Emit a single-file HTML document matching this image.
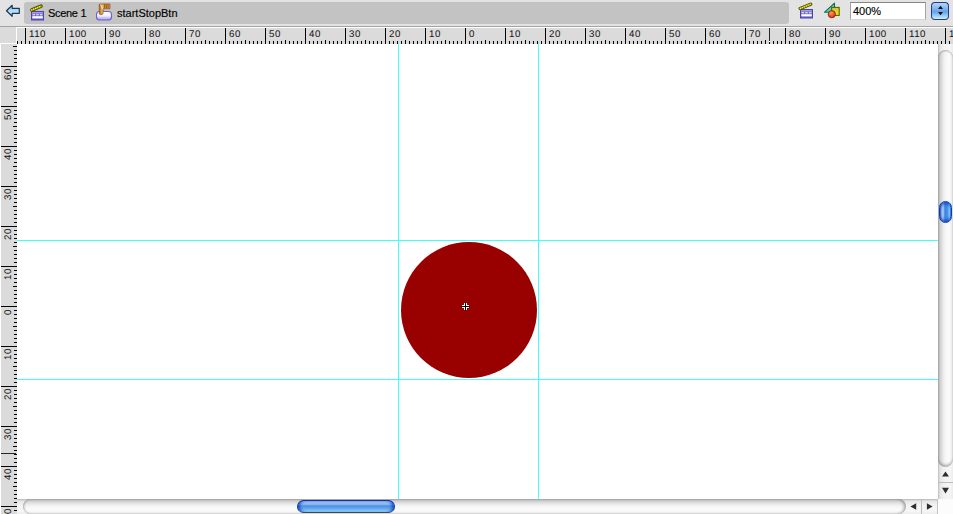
<!DOCTYPE html>
<html><head><meta charset="utf-8">
<style>
html,body{margin:0;padding:0;}
body{width:953px;height:514px;position:relative;overflow:hidden;background:#e3e3e3;font-family:"Liberation Sans",sans-serif;}
.abs{position:absolute;}
.hl{position:absolute;top:29px;font-size:9.7px;line-height:11px;color:#111;letter-spacing:0.5px;text-rendering:geometricPrecision;white-space:nowrap;}
.vl{position:absolute;left:3px;width:11px;text-align:right;font-size:9.7px;line-height:11px;color:#111;letter-spacing:0.5px;text-rendering:geometricPrecision;white-space:nowrap;transform-origin:0 0;}
</style></head><body>
<!-- toolbar -->
<div class="abs" style="left:0;top:26px;width:953px;height:1px;background:#a3a3a3"></div>
<div class="abs" style="left:0;top:27px;width:16px;height:16px;background:#dbdbdb"></div>
<div class="abs" style="left:24px;top:2px;width:765px;height:22px;background:#c3c3c3;border-radius:3px"></div>
<div class="abs" style="left:48px;top:7px;letter-spacing:-0.3px;font-size:11px;line-height:13px;color:#000;-webkit-text-stroke:0.15px #000">Scene 1</div>
<div class="abs" style="left:117px;top:7px;font-size:11px;line-height:13px;color:#000;-webkit-text-stroke:0.15px #000">startStopBtn</div>
<div class="abs" style="left:850px;top:2px;width:74px;height:16px;background:#fff;border:1px solid #a4a4a4;border-top-color:#858585;border-bottom-color:#d4d4d4"></div>
<div class="abs" style="left:853px;top:5px;font-size:11px;line-height:13px;color:#000;-webkit-text-stroke:0.15px #000">400%</div>
<div class="abs" style="left:931px;top:2px;width:18px;height:18px;box-sizing:border-box;border:1px solid #1e3c90;border-bottom-color:#3a3a48;background:linear-gradient(#b4d6f8,#74acec 45%,#64a2ea 55%,#c4f2ff);border-radius:4px"></div>

<!-- back arrow -->
<svg class="abs" style="left:0;top:0" width="24" height="26">
<defs><linearGradient id="ga" x1="0" y1="0" x2="0" y2="1"><stop offset="0" stop-color="#8cc4f4"/><stop offset="1" stop-color="#d8f4ff"/></linearGradient></defs>
<path d="M6.5,10.8 L12.2,5.3 L12.2,8.3 L19.3,8.3 L19.3,13.3 L12.2,13.3 L12.2,16.3 Z" fill="url(#ga)" stroke="#1c3458" stroke-width="1.2" stroke-linejoin="round"/>
</svg>
<!-- clapper 1 -->
<svg class="abs" style="left:29px;top:3px" width="17" height="19">
<rect x="2.5" y="8.5" width="12" height="8.5" fill="#6a62d0" stroke="#4c44a8" stroke-width="1"/>
<rect x="3" y="9.4" width="11" height="0.9" fill="#c8c4f4"/>
<rect x="3.5" y="11.2" width="2.6" height="1.1" fill="#f0f0ff"/><rect x="7.2" y="11.2" width="2.6" height="1.1" fill="#f0f0ff"/><rect x="10.9" y="11.2" width="2.6" height="1.1" fill="#f0f0ff"/>
<rect x="3.3" y="13.2" width="10.5" height="2.2" fill="#ffffff"/>
<path d="M2.9,7.0 L12,3.2" stroke="#484800" stroke-width="3.6" stroke-linecap="round"/>
<path d="M2.9,7.0 L12,3.2" stroke="#8c8c00" stroke-width="2.3" stroke-linecap="round"/>
<path d="M2.6,7.1 L12.2,3.1" stroke="#ffff30" stroke-width="1.4" stroke-linecap="round" stroke-dasharray="0.1,2.1"/>
</svg>
<!-- button icon -->
<svg class="abs" style="left:94px;top:2px" width="20" height="20">
<defs><linearGradient id="gb" x1="0" y1="0" x2="0" y2="1"><stop offset="0" stop-color="#ffffff"/><stop offset="0.5" stop-color="#f2f0ff"/><stop offset="1" stop-color="#a098e4"/></linearGradient>
<linearGradient id="gh" x1="0" y1="0" x2="1" y2="0"><stop offset="0" stop-color="#a86010"/><stop offset="0.3" stop-color="#f4c070"/><stop offset="0.5" stop-color="#c88838"/><stop offset="1" stop-color="#d8a050"/></linearGradient></defs>
<rect x="2.5" y="9.5" width="15" height="8.5" rx="3" fill="url(#gb)" stroke="#6a62d0" stroke-width="1.1"/>
<path d="M5.2,2.3 L8,2 L16,2 L16,6.8 L9.2,6.8 L8.9,12 Q7.1,13.4 5.3,12 Z" fill="url(#gh)" stroke="#8a5418" stroke-width="0.7"/>
<path d="M6.6,2.4 L8.6,7.2" stroke="#fff0b0" stroke-width="0.8"/>
<path d="M10.6,2.3 V6.2 M12.4,2.3 V6.2 M14.2,2.3 V6.2" stroke="#8a5418" stroke-width="0.8"/>
</svg>
<!-- clapper 2 -->
<svg class="abs" style="left:798px;top:2px" width="17" height="19">
<rect x="2.5" y="7.5" width="12" height="8.5" fill="#6a62d0" stroke="#4c44a8" stroke-width="1"/>
<rect x="3" y="8.4" width="11" height="0.9" fill="#c8c4f4"/>
<rect x="3.5" y="10.2" width="2.6" height="1.1" fill="#f0f0ff"/><rect x="7.2" y="10.2" width="2.6" height="1.1" fill="#f0f0ff"/><rect x="10.9" y="10.2" width="2.6" height="1.1" fill="#f0f0ff"/>
<rect x="3.3" y="12.2" width="10.5" height="2.2" fill="#ffffff"/>
<path d="M2.2,6.5 L12.6,2.2" stroke="#484800" stroke-width="3.4" stroke-linecap="round"/>
<path d="M2.2,6.5 L12.6,2.2" stroke="#8c8c00" stroke-width="2.2" stroke-linecap="round"/>
<path d="M2.4,6.4 L12.4,2.3" stroke="#ffff30" stroke-width="1.3" stroke-linecap="round" stroke-dasharray="0.1,2.0"/>
</svg>
<!-- shapes icon -->
<svg class="abs" style="left:822px;top:1px" width="20" height="19">
<defs><radialGradient id="gc" cx="0.4" cy="0.3" r="0.7"><stop offset="0" stop-color="#ff9a60"/><stop offset="1" stop-color="#e03010"/></radialGradient>
<linearGradient id="gs" x1="0" y1="0" x2="0" y2="1"><stop offset="0" stop-color="#c8c830"/><stop offset="1" stop-color="#e8e820"/></linearGradient></defs>
<path d="M2.6,11.2 L12.5,2.2 L12.5,11.2 Z" fill="#5ad8aa" stroke="#0c6a60" stroke-width="1.1" stroke-linejoin="round"/>
<rect x="9.6" y="6.4" width="7.6" height="8" fill="url(#gs)" stroke="#606000" stroke-width="1.1"/>
<circle cx="9.8" cy="13.2" r="3.6" fill="url(#gc)" stroke="#902000" stroke-width="0.9"/>
</svg>
<!-- stepper arrows -->
<svg class="abs" style="left:931px;top:2px" width="18" height="18">
<path d="M7,6.9 L9.5,3.8 L12,6.9 Z M7,10 L12,10 L9.5,13.2 Z" fill="#0c1020"/>
</svg>
<!-- rulers -->
<svg style="position:absolute;left:16px;top:27px" width="937" height="17" shape-rendering="crispEdges"><rect x="0" y="0" width="937" height="17" fill="#dbdbdb"/><rect x="0" y="0" width="937" height="1" fill="#ffffff"/><rect x="0" y="0" width="1" height="17" fill="#ffffff"/><rect x="1" y="14" width="1" height="3" fill="#000"/><rect x="5" y="14" width="1" height="3" fill="#000"/><rect x="9" y="1" width="1" height="16" fill="#000"/><rect x="13" y="14" width="1" height="3" fill="#000"/><rect x="17" y="14" width="1" height="3" fill="#000"/><rect x="21" y="14" width="1" height="3" fill="#000"/><rect x="25" y="14" width="1" height="3" fill="#000"/><rect x="29" y="13" width="1" height="4" fill="#000"/><rect x="33" y="14" width="1" height="3" fill="#000"/><rect x="37" y="14" width="1" height="3" fill="#000"/><rect x="41" y="14" width="1" height="3" fill="#000"/><rect x="45" y="14" width="1" height="3" fill="#000"/><rect x="49" y="1" width="1" height="16" fill="#000"/><rect x="53" y="14" width="1" height="3" fill="#000"/><rect x="57" y="14" width="1" height="3" fill="#000"/><rect x="61" y="14" width="1" height="3" fill="#000"/><rect x="65" y="14" width="1" height="3" fill="#000"/><rect x="69" y="13" width="1" height="4" fill="#000"/><rect x="73" y="14" width="1" height="3" fill="#000"/><rect x="77" y="14" width="1" height="3" fill="#000"/><rect x="81" y="14" width="1" height="3" fill="#000"/><rect x="85" y="14" width="1" height="3" fill="#000"/><rect x="89" y="1" width="1" height="16" fill="#000"/><rect x="93" y="14" width="1" height="3" fill="#000"/><rect x="97" y="14" width="1" height="3" fill="#000"/><rect x="101" y="14" width="1" height="3" fill="#000"/><rect x="105" y="14" width="1" height="3" fill="#000"/><rect x="109" y="13" width="1" height="4" fill="#000"/><rect x="113" y="14" width="1" height="3" fill="#000"/><rect x="117" y="14" width="1" height="3" fill="#000"/><rect x="121" y="14" width="1" height="3" fill="#000"/><rect x="125" y="14" width="1" height="3" fill="#000"/><rect x="129" y="1" width="1" height="16" fill="#000"/><rect x="133" y="14" width="1" height="3" fill="#000"/><rect x="137" y="14" width="1" height="3" fill="#000"/><rect x="141" y="14" width="1" height="3" fill="#000"/><rect x="145" y="14" width="1" height="3" fill="#000"/><rect x="149" y="13" width="1" height="4" fill="#000"/><rect x="153" y="14" width="1" height="3" fill="#000"/><rect x="157" y="14" width="1" height="3" fill="#000"/><rect x="161" y="14" width="1" height="3" fill="#000"/><rect x="165" y="14" width="1" height="3" fill="#000"/><rect x="169" y="1" width="1" height="16" fill="#000"/><rect x="173" y="14" width="1" height="3" fill="#000"/><rect x="177" y="14" width="1" height="3" fill="#000"/><rect x="181" y="14" width="1" height="3" fill="#000"/><rect x="185" y="14" width="1" height="3" fill="#000"/><rect x="189" y="13" width="1" height="4" fill="#000"/><rect x="193" y="14" width="1" height="3" fill="#000"/><rect x="197" y="14" width="1" height="3" fill="#000"/><rect x="201" y="14" width="1" height="3" fill="#000"/><rect x="205" y="14" width="1" height="3" fill="#000"/><rect x="209" y="1" width="1" height="16" fill="#000"/><rect x="213" y="14" width="1" height="3" fill="#000"/><rect x="217" y="14" width="1" height="3" fill="#000"/><rect x="221" y="14" width="1" height="3" fill="#000"/><rect x="225" y="14" width="1" height="3" fill="#000"/><rect x="229" y="13" width="1" height="4" fill="#000"/><rect x="233" y="14" width="1" height="3" fill="#000"/><rect x="237" y="14" width="1" height="3" fill="#000"/><rect x="241" y="14" width="1" height="3" fill="#000"/><rect x="245" y="14" width="1" height="3" fill="#000"/><rect x="249" y="1" width="1" height="16" fill="#000"/><rect x="253" y="14" width="1" height="3" fill="#000"/><rect x="257" y="14" width="1" height="3" fill="#000"/><rect x="261" y="14" width="1" height="3" fill="#000"/><rect x="265" y="14" width="1" height="3" fill="#000"/><rect x="269" y="13" width="1" height="4" fill="#000"/><rect x="273" y="14" width="1" height="3" fill="#000"/><rect x="277" y="14" width="1" height="3" fill="#000"/><rect x="281" y="14" width="1" height="3" fill="#000"/><rect x="285" y="14" width="1" height="3" fill="#000"/><rect x="289" y="1" width="1" height="16" fill="#000"/><rect x="293" y="14" width="1" height="3" fill="#000"/><rect x="297" y="14" width="1" height="3" fill="#000"/><rect x="301" y="14" width="1" height="3" fill="#000"/><rect x="305" y="14" width="1" height="3" fill="#000"/><rect x="309" y="13" width="1" height="4" fill="#000"/><rect x="313" y="14" width="1" height="3" fill="#000"/><rect x="317" y="14" width="1" height="3" fill="#000"/><rect x="321" y="14" width="1" height="3" fill="#000"/><rect x="325" y="14" width="1" height="3" fill="#000"/><rect x="329" y="1" width="1" height="16" fill="#000"/><rect x="333" y="14" width="1" height="3" fill="#000"/><rect x="337" y="14" width="1" height="3" fill="#000"/><rect x="341" y="14" width="1" height="3" fill="#000"/><rect x="345" y="14" width="1" height="3" fill="#000"/><rect x="349" y="13" width="1" height="4" fill="#000"/><rect x="353" y="14" width="1" height="3" fill="#000"/><rect x="357" y="14" width="1" height="3" fill="#000"/><rect x="361" y="14" width="1" height="3" fill="#000"/><rect x="365" y="14" width="1" height="3" fill="#000"/><rect x="369" y="1" width="1" height="16" fill="#000"/><rect x="373" y="14" width="1" height="3" fill="#000"/><rect x="377" y="14" width="1" height="3" fill="#000"/><rect x="381" y="14" width="1" height="3" fill="#000"/><rect x="385" y="14" width="1" height="3" fill="#000"/><rect x="389" y="13" width="1" height="4" fill="#000"/><rect x="393" y="14" width="1" height="3" fill="#000"/><rect x="397" y="14" width="1" height="3" fill="#000"/><rect x="401" y="14" width="1" height="3" fill="#000"/><rect x="405" y="14" width="1" height="3" fill="#000"/><rect x="409" y="1" width="1" height="16" fill="#000"/><rect x="413" y="14" width="1" height="3" fill="#000"/><rect x="417" y="14" width="1" height="3" fill="#000"/><rect x="421" y="14" width="1" height="3" fill="#000"/><rect x="425" y="14" width="1" height="3" fill="#000"/><rect x="429" y="13" width="1" height="4" fill="#000"/><rect x="433" y="14" width="1" height="3" fill="#000"/><rect x="437" y="14" width="1" height="3" fill="#000"/><rect x="441" y="14" width="1" height="3" fill="#000"/><rect x="445" y="14" width="1" height="3" fill="#000"/><rect x="449" y="1" width="1" height="16" fill="#000"/><rect x="453" y="14" width="1" height="3" fill="#000"/><rect x="457" y="14" width="1" height="3" fill="#000"/><rect x="461" y="14" width="1" height="3" fill="#000"/><rect x="465" y="14" width="1" height="3" fill="#000"/><rect x="469" y="13" width="1" height="4" fill="#000"/><rect x="473" y="14" width="1" height="3" fill="#000"/><rect x="477" y="14" width="1" height="3" fill="#000"/><rect x="481" y="14" width="1" height="3" fill="#000"/><rect x="485" y="14" width="1" height="3" fill="#000"/><rect x="489" y="1" width="1" height="16" fill="#000"/><rect x="493" y="14" width="1" height="3" fill="#000"/><rect x="497" y="14" width="1" height="3" fill="#000"/><rect x="501" y="14" width="1" height="3" fill="#000"/><rect x="505" y="14" width="1" height="3" fill="#000"/><rect x="509" y="13" width="1" height="4" fill="#000"/><rect x="513" y="14" width="1" height="3" fill="#000"/><rect x="517" y="14" width="1" height="3" fill="#000"/><rect x="521" y="14" width="1" height="3" fill="#000"/><rect x="525" y="14" width="1" height="3" fill="#000"/><rect x="529" y="1" width="1" height="16" fill="#000"/><rect x="533" y="14" width="1" height="3" fill="#000"/><rect x="537" y="14" width="1" height="3" fill="#000"/><rect x="541" y="14" width="1" height="3" fill="#000"/><rect x="545" y="14" width="1" height="3" fill="#000"/><rect x="549" y="13" width="1" height="4" fill="#000"/><rect x="553" y="14" width="1" height="3" fill="#000"/><rect x="557" y="14" width="1" height="3" fill="#000"/><rect x="561" y="14" width="1" height="3" fill="#000"/><rect x="565" y="14" width="1" height="3" fill="#000"/><rect x="569" y="1" width="1" height="16" fill="#000"/><rect x="573" y="14" width="1" height="3" fill="#000"/><rect x="577" y="14" width="1" height="3" fill="#000"/><rect x="581" y="14" width="1" height="3" fill="#000"/><rect x="585" y="14" width="1" height="3" fill="#000"/><rect x="589" y="13" width="1" height="4" fill="#000"/><rect x="593" y="14" width="1" height="3" fill="#000"/><rect x="597" y="14" width="1" height="3" fill="#000"/><rect x="601" y="14" width="1" height="3" fill="#000"/><rect x="605" y="14" width="1" height="3" fill="#000"/><rect x="609" y="1" width="1" height="16" fill="#000"/><rect x="613" y="14" width="1" height="3" fill="#000"/><rect x="617" y="14" width="1" height="3" fill="#000"/><rect x="621" y="14" width="1" height="3" fill="#000"/><rect x="625" y="14" width="1" height="3" fill="#000"/><rect x="629" y="13" width="1" height="4" fill="#000"/><rect x="633" y="14" width="1" height="3" fill="#000"/><rect x="637" y="14" width="1" height="3" fill="#000"/><rect x="641" y="14" width="1" height="3" fill="#000"/><rect x="645" y="14" width="1" height="3" fill="#000"/><rect x="649" y="1" width="1" height="16" fill="#000"/><rect x="653" y="14" width="1" height="3" fill="#000"/><rect x="657" y="14" width="1" height="3" fill="#000"/><rect x="661" y="14" width="1" height="3" fill="#000"/><rect x="665" y="14" width="1" height="3" fill="#000"/><rect x="669" y="13" width="1" height="4" fill="#000"/><rect x="673" y="14" width="1" height="3" fill="#000"/><rect x="677" y="14" width="1" height="3" fill="#000"/><rect x="681" y="14" width="1" height="3" fill="#000"/><rect x="685" y="14" width="1" height="3" fill="#000"/><rect x="689" y="1" width="1" height="16" fill="#000"/><rect x="693" y="14" width="1" height="3" fill="#000"/><rect x="697" y="14" width="1" height="3" fill="#000"/><rect x="701" y="14" width="1" height="3" fill="#000"/><rect x="705" y="14" width="1" height="3" fill="#000"/><rect x="709" y="13" width="1" height="4" fill="#000"/><rect x="713" y="14" width="1" height="3" fill="#000"/><rect x="717" y="14" width="1" height="3" fill="#000"/><rect x="721" y="14" width="1" height="3" fill="#000"/><rect x="725" y="14" width="1" height="3" fill="#000"/><rect x="729" y="1" width="1" height="16" fill="#000"/><rect x="733" y="14" width="1" height="3" fill="#000"/><rect x="737" y="14" width="1" height="3" fill="#000"/><rect x="741" y="14" width="1" height="3" fill="#000"/><rect x="745" y="14" width="1" height="3" fill="#000"/><rect x="749" y="13" width="1" height="4" fill="#000"/><rect x="753" y="14" width="1" height="3" fill="#000"/><rect x="757" y="14" width="1" height="3" fill="#000"/><rect x="761" y="14" width="1" height="3" fill="#000"/><rect x="765" y="14" width="1" height="3" fill="#000"/><rect x="769" y="1" width="1" height="16" fill="#000"/><rect x="773" y="14" width="1" height="3" fill="#000"/><rect x="777" y="14" width="1" height="3" fill="#000"/><rect x="781" y="14" width="1" height="3" fill="#000"/><rect x="785" y="14" width="1" height="3" fill="#000"/><rect x="789" y="13" width="1" height="4" fill="#000"/><rect x="793" y="14" width="1" height="3" fill="#000"/><rect x="797" y="14" width="1" height="3" fill="#000"/><rect x="801" y="14" width="1" height="3" fill="#000"/><rect x="805" y="14" width="1" height="3" fill="#000"/><rect x="809" y="1" width="1" height="16" fill="#000"/><rect x="813" y="14" width="1" height="3" fill="#000"/><rect x="817" y="14" width="1" height="3" fill="#000"/><rect x="821" y="14" width="1" height="3" fill="#000"/><rect x="825" y="14" width="1" height="3" fill="#000"/><rect x="829" y="13" width="1" height="4" fill="#000"/><rect x="833" y="14" width="1" height="3" fill="#000"/><rect x="837" y="14" width="1" height="3" fill="#000"/><rect x="841" y="14" width="1" height="3" fill="#000"/><rect x="845" y="14" width="1" height="3" fill="#000"/><rect x="849" y="1" width="1" height="16" fill="#000"/><rect x="853" y="14" width="1" height="3" fill="#000"/><rect x="857" y="14" width="1" height="3" fill="#000"/><rect x="861" y="14" width="1" height="3" fill="#000"/><rect x="865" y="14" width="1" height="3" fill="#000"/><rect x="869" y="13" width="1" height="4" fill="#000"/><rect x="873" y="14" width="1" height="3" fill="#000"/><rect x="877" y="14" width="1" height="3" fill="#000"/><rect x="881" y="14" width="1" height="3" fill="#000"/><rect x="885" y="14" width="1" height="3" fill="#000"/><rect x="889" y="1" width="1" height="16" fill="#000"/><rect x="893" y="14" width="1" height="3" fill="#000"/><rect x="897" y="14" width="1" height="3" fill="#000"/><rect x="901" y="14" width="1" height="3" fill="#000"/><rect x="905" y="14" width="1" height="3" fill="#000"/><rect x="909" y="13" width="1" height="4" fill="#000"/><rect x="913" y="14" width="1" height="3" fill="#000"/><rect x="917" y="14" width="1" height="3" fill="#000"/><rect x="921" y="14" width="1" height="3" fill="#000"/><rect x="925" y="14" width="1" height="3" fill="#000"/><rect x="929" y="1" width="1" height="16" fill="#000"/><rect x="933" y="14" width="1" height="3" fill="#000"/><rect x="753" y="1" width="1" height="13" fill="#262626"/><rect x="753" y="14" width="1" height="1" fill="#ffffff"/></svg><div class="hl" style="left:29px">110</div><div class="hl" style="left:69px">100</div><div class="hl" style="left:109px">90</div><div class="hl" style="left:149px">80</div><div class="hl" style="left:189px">70</div><div class="hl" style="left:229px">60</div><div class="hl" style="left:269px">50</div><div class="hl" style="left:309px">40</div><div class="hl" style="left:349px">30</div><div class="hl" style="left:389px">20</div><div class="hl" style="left:429px">10</div><div class="hl" style="left:469px">0</div><div class="hl" style="left:509px">10</div><div class="hl" style="left:549px">20</div><div class="hl" style="left:589px">30</div><div class="hl" style="left:629px">40</div><div class="hl" style="left:669px">50</div><div class="hl" style="left:709px">60</div><div class="hl" style="left:749px">70</div><div class="hl" style="left:789px">80</div><div class="hl" style="left:829px">90</div><div class="hl" style="left:869px">100</div><div class="hl" style="left:909px">110</div><div class="hl" style="left:949px">120</div>
<svg style="position:absolute;left:0;top:43px" width="17" height="471" shape-rendering="crispEdges"><rect x="0" y="0" width="17" height="471" fill="#dbdbdb"/><rect x="0" y="0" width="17" height="1" fill="#ffffff"/><rect x="0" y="0" width="1" height="471" fill="#ffffff"/><rect x="13" y="3" width="4" height="1" fill="#000"/><rect x="14" y="7" width="3" height="1" fill="#000"/><rect x="14" y="11" width="3" height="1" fill="#000"/><rect x="14" y="15" width="3" height="1" fill="#000"/><rect x="14" y="19" width="3" height="1" fill="#000"/><rect x="1" y="23" width="16" height="1" fill="#000"/><rect x="14" y="27" width="3" height="1" fill="#000"/><rect x="14" y="31" width="3" height="1" fill="#000"/><rect x="14" y="35" width="3" height="1" fill="#000"/><rect x="14" y="39" width="3" height="1" fill="#000"/><rect x="13" y="43" width="4" height="1" fill="#000"/><rect x="14" y="47" width="3" height="1" fill="#000"/><rect x="14" y="51" width="3" height="1" fill="#000"/><rect x="14" y="55" width="3" height="1" fill="#000"/><rect x="14" y="59" width="3" height="1" fill="#000"/><rect x="1" y="63" width="16" height="1" fill="#000"/><rect x="14" y="67" width="3" height="1" fill="#000"/><rect x="14" y="71" width="3" height="1" fill="#000"/><rect x="14" y="75" width="3" height="1" fill="#000"/><rect x="14" y="79" width="3" height="1" fill="#000"/><rect x="13" y="83" width="4" height="1" fill="#000"/><rect x="14" y="87" width="3" height="1" fill="#000"/><rect x="14" y="91" width="3" height="1" fill="#000"/><rect x="14" y="95" width="3" height="1" fill="#000"/><rect x="14" y="99" width="3" height="1" fill="#000"/><rect x="1" y="103" width="16" height="1" fill="#000"/><rect x="14" y="107" width="3" height="1" fill="#000"/><rect x="14" y="111" width="3" height="1" fill="#000"/><rect x="14" y="115" width="3" height="1" fill="#000"/><rect x="14" y="119" width="3" height="1" fill="#000"/><rect x="13" y="123" width="4" height="1" fill="#000"/><rect x="14" y="127" width="3" height="1" fill="#000"/><rect x="14" y="131" width="3" height="1" fill="#000"/><rect x="14" y="135" width="3" height="1" fill="#000"/><rect x="14" y="139" width="3" height="1" fill="#000"/><rect x="1" y="143" width="16" height="1" fill="#000"/><rect x="14" y="147" width="3" height="1" fill="#000"/><rect x="14" y="151" width="3" height="1" fill="#000"/><rect x="14" y="155" width="3" height="1" fill="#000"/><rect x="14" y="159" width="3" height="1" fill="#000"/><rect x="13" y="163" width="4" height="1" fill="#000"/><rect x="14" y="167" width="3" height="1" fill="#000"/><rect x="14" y="171" width="3" height="1" fill="#000"/><rect x="14" y="175" width="3" height="1" fill="#000"/><rect x="14" y="179" width="3" height="1" fill="#000"/><rect x="1" y="183" width="16" height="1" fill="#000"/><rect x="14" y="187" width="3" height="1" fill="#000"/><rect x="14" y="191" width="3" height="1" fill="#000"/><rect x="14" y="195" width="3" height="1" fill="#000"/><rect x="14" y="199" width="3" height="1" fill="#000"/><rect x="13" y="203" width="4" height="1" fill="#000"/><rect x="14" y="207" width="3" height="1" fill="#000"/><rect x="14" y="211" width="3" height="1" fill="#000"/><rect x="14" y="215" width="3" height="1" fill="#000"/><rect x="14" y="219" width="3" height="1" fill="#000"/><rect x="1" y="223" width="16" height="1" fill="#000"/><rect x="14" y="227" width="3" height="1" fill="#000"/><rect x="14" y="231" width="3" height="1" fill="#000"/><rect x="14" y="235" width="3" height="1" fill="#000"/><rect x="14" y="239" width="3" height="1" fill="#000"/><rect x="13" y="243" width="4" height="1" fill="#000"/><rect x="14" y="247" width="3" height="1" fill="#000"/><rect x="14" y="251" width="3" height="1" fill="#000"/><rect x="14" y="255" width="3" height="1" fill="#000"/><rect x="14" y="259" width="3" height="1" fill="#000"/><rect x="1" y="263" width="16" height="1" fill="#000"/><rect x="14" y="267" width="3" height="1" fill="#000"/><rect x="14" y="271" width="3" height="1" fill="#000"/><rect x="14" y="275" width="3" height="1" fill="#000"/><rect x="14" y="279" width="3" height="1" fill="#000"/><rect x="13" y="283" width="4" height="1" fill="#000"/><rect x="14" y="287" width="3" height="1" fill="#000"/><rect x="14" y="291" width="3" height="1" fill="#000"/><rect x="14" y="295" width="3" height="1" fill="#000"/><rect x="14" y="299" width="3" height="1" fill="#000"/><rect x="1" y="303" width="16" height="1" fill="#000"/><rect x="14" y="307" width="3" height="1" fill="#000"/><rect x="14" y="311" width="3" height="1" fill="#000"/><rect x="14" y="315" width="3" height="1" fill="#000"/><rect x="14" y="319" width="3" height="1" fill="#000"/><rect x="13" y="323" width="4" height="1" fill="#000"/><rect x="14" y="327" width="3" height="1" fill="#000"/><rect x="14" y="331" width="3" height="1" fill="#000"/><rect x="14" y="335" width="3" height="1" fill="#000"/><rect x="14" y="339" width="3" height="1" fill="#000"/><rect x="1" y="343" width="16" height="1" fill="#000"/><rect x="14" y="347" width="3" height="1" fill="#000"/><rect x="14" y="351" width="3" height="1" fill="#000"/><rect x="14" y="355" width="3" height="1" fill="#000"/><rect x="14" y="359" width="3" height="1" fill="#000"/><rect x="13" y="363" width="4" height="1" fill="#000"/><rect x="14" y="367" width="3" height="1" fill="#000"/><rect x="14" y="371" width="3" height="1" fill="#000"/><rect x="14" y="375" width="3" height="1" fill="#000"/><rect x="14" y="379" width="3" height="1" fill="#000"/><rect x="1" y="383" width="16" height="1" fill="#000"/><rect x="14" y="387" width="3" height="1" fill="#000"/><rect x="14" y="391" width="3" height="1" fill="#000"/><rect x="14" y="395" width="3" height="1" fill="#000"/><rect x="14" y="399" width="3" height="1" fill="#000"/><rect x="13" y="403" width="4" height="1" fill="#000"/><rect x="14" y="407" width="3" height="1" fill="#000"/><rect x="14" y="411" width="3" height="1" fill="#000"/><rect x="14" y="415" width="3" height="1" fill="#000"/><rect x="14" y="419" width="3" height="1" fill="#000"/><rect x="1" y="423" width="16" height="1" fill="#000"/><rect x="14" y="427" width="3" height="1" fill="#000"/><rect x="14" y="431" width="3" height="1" fill="#000"/><rect x="14" y="435" width="3" height="1" fill="#000"/><rect x="14" y="439" width="3" height="1" fill="#000"/><rect x="13" y="443" width="4" height="1" fill="#000"/><rect x="14" y="447" width="3" height="1" fill="#000"/><rect x="14" y="451" width="3" height="1" fill="#000"/><rect x="14" y="455" width="3" height="1" fill="#000"/><rect x="14" y="459" width="3" height="1" fill="#000"/><rect x="1" y="463" width="16" height="1" fill="#000"/><rect x="14" y="467" width="3" height="1" fill="#000"/><rect x="1" y="410" width="15" height="1" fill="#262626"/></svg><div class="vl" style="transform:rotate(-90deg) translate(-11px,0);top:69px">60</div><div class="vl" style="transform:rotate(-90deg) translate(-11px,0);top:109px">50</div><div class="vl" style="transform:rotate(-90deg) translate(-11px,0);top:149px">40</div><div class="vl" style="transform:rotate(-90deg) translate(-11px,0);top:189px">30</div><div class="vl" style="transform:rotate(-90deg) translate(-11px,0);top:229px">20</div><div class="vl" style="transform:rotate(-90deg) translate(-11px,0);top:269px">10</div><div class="vl" style="transform:rotate(-90deg) translate(-11px,0);top:309px">0</div><div class="vl" style="transform:rotate(-90deg) translate(-11px,0);top:349px">10</div><div class="vl" style="transform:rotate(-90deg) translate(-11px,0);top:389px">20</div><div class="vl" style="transform:rotate(-90deg) translate(-11px,0);top:429px">30</div><div class="vl" style="transform:rotate(-90deg) translate(-11px,0);top:469px">40</div><div class="vl" style="transform:rotate(-90deg) translate(-11px,0);top:509px">50</div>
<!-- canvas -->
<div class="abs" style="left:17px;top:44px;width:921px;height:455px;background:#fff"></div>
<div class="abs" style="left:398px;top:44px;width:1px;height:455px;background:#40ffff"></div>
<div class="abs" style="left:538px;top:44px;width:1px;height:455px;background:#40ffff"></div>
<div class="abs" style="left:17px;top:240px;width:921px;height:1px;background:#40ffff"></div>
<div class="abs" style="left:17px;top:379px;width:921px;height:1px;background:#40ffff"></div>
<div class="abs" style="left:401px;top:242px;width:136px;height:136px;border-radius:50%;background:#990000"></div>
<svg class="abs" style="left:461px;top:302px" width="9" height="9" shape-rendering="crispEdges">
<path d="M3,1h3v2h2v3h-2v2h-3v-2h-2v-3h2z" fill="#fff"/>
<rect x="4" y="0" width="1" height="9" fill="#000"/><rect x="0" y="4" width="9" height="1" fill="#000"/>
</svg>
<!-- scrollbars -->
<div class="abs" style="left:938px;top:44px;width:15px;height:455px;background:linear-gradient(90deg,#bdbdbd,#e6e6e6 14%,#f2f2f2 40%,#f6f6f6 80%,#ececec)"></div>
<div class="abs" style="left:938px;top:50px;width:15px;height:417px;border-radius:7.5px;background:linear-gradient(90deg,#b4b4b4 3.3%,#c6c6c6 10.0%,#d2d2d2 16.7%,#dcdcdc 23.3%,#e4e4e4 30.0%,#ebebeb 36.7%,#f1f1f1 43.3%,#f5f5f5 50.0%,#f8f8f8 56.7%,#f9f9f9 63.3%,#fafafa 70.0%,#fafafa 76.7%,#f6f6f6 83.3%,#f0f0f0 90.0%,#e6e6e6 96.7%);box-shadow:inset 0 2px 2px -1px rgba(0,0,0,0.3), inset 0 -3px 3px -1px rgba(0,0,0,0.3)"></div>
<div class="abs" style="left:938px;top:482px;width:15px;height:1px;background:#bdbdbd"></div>
<svg class="abs" style="left:938px;top:467px" width="15" height="32"><path d="M4,9.6 L7.5,4.6 L11,9.6 Z M4,20.8 L11,20.8 L7.5,26.6 Z" fill="#2e2e2e"/></svg>
<div class="abs" style="left:17px;top:499px;width:921px;height:15px;background:linear-gradient(#b8b8b8,#e6e6e6 14%,#f2f2f2 40%,#f6f6f6 80%,#ececec)"></div>
<div class="abs" style="left:23px;top:499px;width:883px;height:15px;border-radius:7.5px;background:linear-gradient(#b4b4b4 3.3%,#c6c6c6 10.0%,#d2d2d2 16.7%,#dcdcdc 23.3%,#e4e4e4 30.0%,#ebebeb 36.7%,#f1f1f1 43.3%,#f5f5f5 50.0%,#f8f8f8 56.7%,#f9f9f9 63.3%,#fafafa 70.0%,#fafafa 76.7%,#f6f6f6 83.3%,#f0f0f0 90.0%,#e6e6e6 96.7%);box-shadow:inset 2px 0 2px -1px rgba(0,0,0,0.3), inset -3px 0 3px -1px rgba(0,0,0,0.3)"></div>
<div class="abs" style="left:921px;top:499px;width:1px;height:15px;background:#bdbdbd"></div>
<div class="abs" style="left:937px;top:499px;width:1px;height:15px;background:#c4c4c4"></div>
<svg class="abs" style="left:906px;top:499px" width="32" height="15"><path d="M4.4,7.6 L10.2,4.2 L10.2,10.8 Z M20.9,4.2 L26.6,7.6 L20.9,10.8 Z" fill="#2e2e2e"/></svg>
<div class="abs" style="left:938px;top:499px;width:15px;height:15px;background:#fcfcfc"></div>
<div class="abs" style="left:297px;top:500px;width:98px;height:13px;box-sizing:border-box;border-radius:6.5px;border:1px solid #0634a8;border-bottom-color:#404858;background:linear-gradient(#a4c6f0 0%,#90b8ec 30%,#4a8ee6 45%,#6ab0f0 75%,#a8e6ff 100%);box-shadow:inset 3px 0 3px -1px rgba(0,50,190,0.7), inset -3px 0 3px -1px rgba(0,50,190,0.7)"></div>
<div class="abs" style="left:939px;top:201px;width:13px;height:22px;box-sizing:border-box;border-radius:6.5px;border:1px solid #0c3cb0;background:linear-gradient(90deg,#2a64d0 0%,#a0c4f0 18%,#98bcee 32%,#3c80e0 45%,#4a94ea 70%,#88d4ff 88%,#3070d8 100%);box-shadow:inset 0 3px 3px -1px rgba(0,50,190,0.7), inset 0 -3px 3px -1px rgba(0,50,190,0.7)"></div>
</body></html>
